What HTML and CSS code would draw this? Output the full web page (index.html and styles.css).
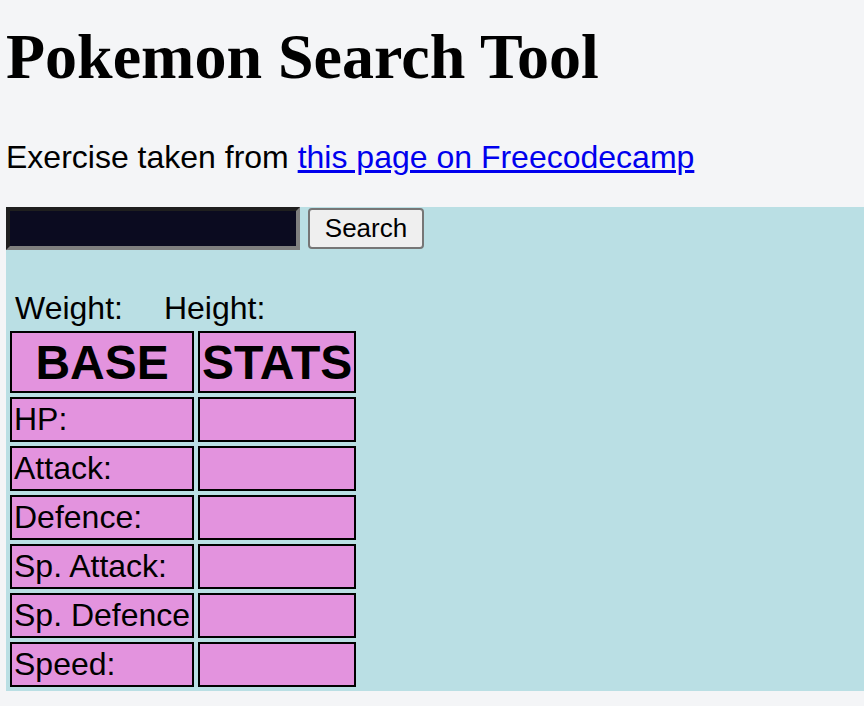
FILE: index.html
```html
<!DOCTYPE html>
<html lang="en">
<head>
<meta charset="utf-8">
<title>Pokemon Search Tool</title>
<link rel="stylesheet" href="styles.css">
</head>
<body>
<h1 class="title">Pokemon Search Tool</h1>
<p class="intro">Exercise taken from <a class="intro-link" href="#">this page on Freecodecamp</a></p>
<section class="panel">
  <div class="search-row">
    <input class="search-input" type="text" aria-label="Pokemon name or id">
    <button class="search-btn" type="button">Search</button>
  </div>
  <div class="dims">
    <span class="dim">Weight:</span>
    <span class="dim">Height:</span>
  </div>
  <table class="stats">
    <thead>
      <tr class="head-row"><th class="c1">BASE</th><th class="c2">STATS</th></tr>
    </thead>
    <tbody>
      <tr><td class="c1">HP:</td><td class="c2"></td></tr>
      <tr><td class="c1">Attack:</td><td class="c2"></td></tr>
      <tr><td class="c1">Defence:</td><td class="c2"></td></tr>
      <tr><td class="c1">Sp. Attack:</td><td class="c2"></td></tr>
      <tr><td class="c1">Sp. Defence</td><td class="c2"></td></tr>
      <tr><td class="c1">Speed:</td><td class="c2"></td></tr>
    </tbody>
  </table>
</section>
</body>
</html>
```

FILE: styles.css
```css
html, body {
  margin: 0;
  padding: 0;
}
body {
  padding-left: 6px;
  background: #f4f5f7;
  font-family: "Liberation Sans", Arial, sans-serif;
  color: #000;
  overflow: hidden;
}
.title {
  font-family: "Liberation Serif", "Times New Roman", serif;
  font-size: 64px;
  font-weight: bold;
  margin: 20px 0 0 0;
}
.intro {
  font-size: 32px;
  margin: 45px 0 0 0;
}
.intro-link {
  color: #0000ee;
  text-decoration: underline;
}
.panel {
  margin-top: 31px;
  background: #badfe4;
}
.search-row {
  display: flex;
  align-items: center;
  gap: 8px;
}
.search-input {
  box-sizing: border-box;
  width: 294px;
  height: 43px;
  margin: 0;
  padding: 0;
  background: #0b0b20;
  border-style: solid;
  border-width: 4px;
  border-color: #1f1f1f #7f7f7f #7f7f7f #1f1f1f;
}
.search-btn {
  box-sizing: border-box;
  width: 116px;
  height: 41px;
  margin: 0;
  padding: 0;
  background: #efefef;
  border: 2px solid #767676;
  border-radius: 4px;
  font-family: "Liberation Sans", Arial, sans-serif;
  font-size: 26px;
  color: #000;
}
.dims {
  display: flex;
  gap: 41px;
  padding-left: 9px;
  margin-top: 40px;
  height: 37px;
  font-size: 32px;
}
.stats {
  border-collapse: separate;
  border-spacing: 4px;
  table-layout: fixed;
}
.stats th,
.stats td {
  box-sizing: border-box;
  background: #e393de;
  border: 2px solid #000;
  padding: 0 2px;
  height: 45px;
  font-size: 32px;
  text-align: left;
  vertical-align: middle;
  white-space: nowrap;
  overflow: hidden;
}
.stats .c1 { width: 184px; }
.stats .c2 { width: 158px; }
.stats .head-row th {
  height: 62px;
  font-size: 48px;
  font-weight: bold;
  text-align: center;
  padding: 0;
}
```
